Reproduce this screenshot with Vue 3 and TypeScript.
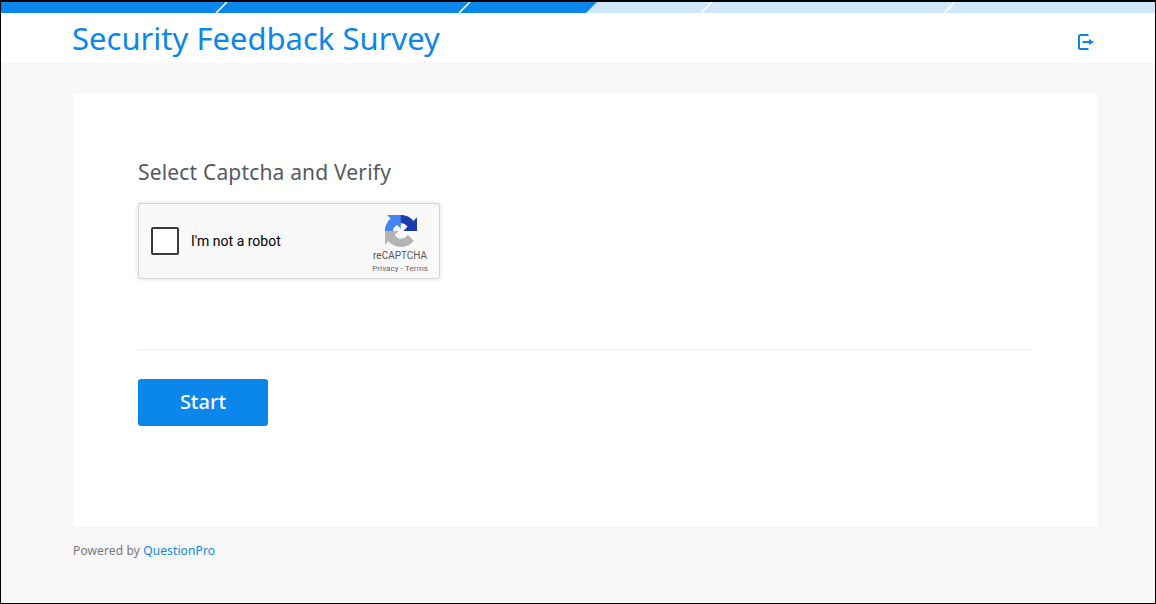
<template>
  <div class="page">
    <header class="topbar">
      <svg class="stripe" width="1154" height="11" viewBox="0 0 1154 11" aria-hidden="true">
        <rect width="1154" height="11" fill="#d0e7fb" />
        <polygon points="0,0 596,0 585,11 0,11" fill="#0b87ec" />
        <g stroke="#fff" stroke-width="1.5">
          <line x1="226" y1="0" x2="215" y2="11" />
          <line x1="469" y1="0" x2="458" y2="11" />
          <line x1="711" y1="0" x2="700" y2="11" />
          <line x1="954" y1="0" x2="943" y2="11" />
        </g>
      </svg>
      <div class="titlebar">
        <h1 class="titlebar__title">Security Feedback Survey</h1>
        <svg class="titlebar__exit" width="16" height="16" viewBox="0 0 16 16" aria-hidden="true">
          <path d="M10.5 1H2.5A1.5 1.5 0 0 0 1 2.5v11A1.5 1.5 0 0 0 2.5 15h8" fill="none" stroke="#0b87ec" stroke-width="2" />
          <path d="M4.5 8H12" stroke="#0b87ec" stroke-width="2" fill="none" />
          <path d="M11 5l5 3-5 3z" fill="#0b87ec" />
        </svg>
      </div>
    </header>

    <main class="content">
      <section class="card">
        <h2 class="card__heading">Select Captcha and Verify</h2>

        <div class="captcha">
          <span class="captcha__box"></span>
          <span class="captcha__label">I'm not a robot</span>
          <div class="captcha__brand">
            <svg class="captcha__logo" width="32" height="32" viewBox="0 0 64 64" aria-hidden="true">
              <path d="M64 31.955l-.033-1.37V4.687l-7.16 7.16C50.948 4.674 42.033.097 32.05.097c-10.39 0-19.62 4.96-25.453 12.64l11.736 11.86a15.565 15.565 0 0 1 4.754-5.333c2.05-1.6 4.952-2.906 8.962-2.906.484 0 .858.057 1.133.163 4.967.392 9.273 3.133 11.808 7.113l-8.308 8.308c10.523-.04 22.41-.065 27.917.01" fill="#1c3aa9" />
              <path d="M31.59.072l-1.37.033H4.322l7.16 7.16C4.31 13.123-.267 22.038-.267 32.02c0 10.39 4.96 19.62 12.64 25.453l11.86-11.736a15.565 15.565 0 0 1-5.333-4.754c-1.6-2.05-2.906-4.952-2.906-8.962 0-.484.057-.858.163-1.133.392-4.967 3.133-9.273 7.113-11.808l8.308 8.308c-.04-10.523-.065-22.41.01-27.917" fill="#4285f4" />
              <path d="M.001 32.045l.033 1.37v25.898l7.16-7.16c5.858 7.173 14.773 11.75 24.755 11.75 10.39 0 19.62-4.96 25.453-12.64l-11.736-11.86a15.565 15.565 0 0 1-4.754 5.333c-2.05 1.6-4.952 2.906-8.962 2.906-.484 0-.858-.057-1.133-.163-4.967-.392-9.273-3.133-11.808-7.113l8.308-8.308c-10.523.04-22.41.065-27.917-.01" fill="#b4b4b4" />
            </svg>
            <span class="captcha__name">reCAPTCHA</span>
            <span class="captcha__links">Privacy - Terms</span>
          </div>
        </div>

        <hr class="card__rule" />

        <button class="card__start" type="button">Start</button>
      </section>

      <p class="powered">Powered by <a class="powered__link">QuestionPro</a></p>
    </main>
  </div>
</template>

<script setup lang="ts">
</script>

<style>
html,
body {
  margin: 0;
  background: #000;
}
</style>

<style scoped>
.page {
  box-sizing: border-box;
  height: 604px;
  border-style: solid;
  border-color: #000;
  border-width: 2px 1px 1px 1px;
  background: #f7f7f7;
  font-family: "Noto Sans", "Open Sans", sans-serif;
  overflow: hidden;
}

.topbar {
  background: #fff;
}

.stripe {
  display: block;
}

.titlebar {
  display: flex;
  align-items: center;
  justify-content: space-between;
  height: 50px;
  padding: 0 61px 0 71px;
}

.titlebar__title {
  margin: 0;
  font-size: 31px;
  font-weight: 400;
  color: #0b87ec;
  line-height: 50px;
}

.titlebar__exit {
  margin-top: 8px;
}

.content {
  padding: 30px 58px 0 72px;
}

.card {
  box-sizing: border-box;
  height: 434px;
  padding: 64px 65px 0;
  background: #fff;
}

.card__heading {
  margin: 0;
  font-size: 21px;
  line-height: 30px;
  font-weight: 400;
  letter-spacing: 0.17px;
  color: #555a5f;
}

.captcha {
  box-sizing: border-box;
  display: flex;
  align-items: center;
  width: 302px;
  height: 76px;
  margin-top: 16px;
  padding: 0 12px;
  background: #f9f9f9;
  border: 1px solid #d3d3d3;
  border-radius: 3px;
  box-shadow: 0 0 4px 1px rgba(0, 0, 0, 0.08);
  font-family: Roboto, "Liberation Sans", sans-serif;
}

.captcha__box {
  box-sizing: border-box;
  flex: none;
  width: 28px;
  height: 28px;
  background: #fff;
  border: 2px solid #3a3a3a;
  border-radius: 2px;
}

.captcha__label {
  margin-left: 12px;
  font-size: 14px;
  color: #000;
}

.captcha__brand {
  display: flex;
  flex-direction: column;
  align-items: center;
  align-self: flex-start;
  margin: 11px -1px 0 auto;
  color: #555;
}

.captcha__logo {
  margin: 0 0 3px 1px;
}

.captcha__name {
  font-size: 10px;
  line-height: 12px;
}

.captcha__links {
  margin-top: 1px;
  font-size: 8px;
  line-height: 12px;
  letter-spacing: 0.1px;
  color: #666;
}

.card__rule {
  margin: 70px 0 0;
  border: 0;
  border-top: 1px solid #eeeeee;
}

.card__start {
  display: block;
  width: 130px;
  height: 47px;
  margin-top: 29px;
  padding: 0 0 2px;
  border: 0;
  border-radius: 3px;
  background: #0b87ec;
  color: #fff;
  font-family: inherit;
  font-size: 20px;
  font-weight: 500;
}

.powered {
  margin: 15px 0 0;
  font-size: 12px;
  line-height: 18px;
  letter-spacing: 0.12px;
  color: #777;
}

.powered__link {
  color: #0b87ec;
}
</style>
